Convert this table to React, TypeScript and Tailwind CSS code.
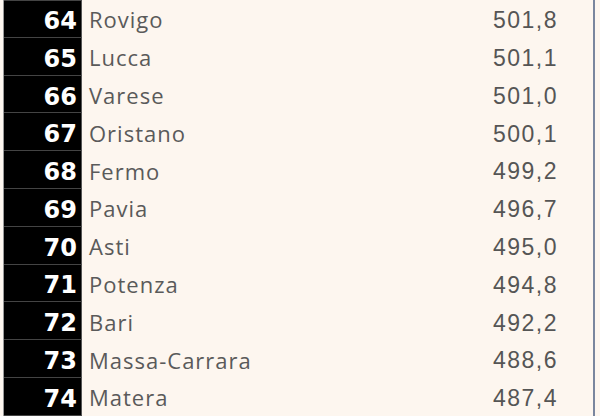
const rows: [number, string, string][] = [
  [64, "Rovigo", "501,8"],
  [65, "Lucca", "501,1"],
  [66, "Varese", "501,0"],
  [67, "Oristano", "500,1"],
  [68, "Fermo", "499,2"],
  [69, "Pavia", "496,7"],
  [70, "Asti", "495,0"],
  [71, "Potenza", "494,8"],
  [72, "Bari", "492,2"],
  [73, "Massa-Carrara", "488,6"],
  [74, "Matera", "487,4"],
];

export default function App() {
  return (
    <div className="h-[416px] w-[600px] overflow-hidden bg-[#fdf6ef] pl-[3px] pr-[5px]">
      <div className="border-l border-r-2 border-l-[#9a9a9a] border-r-[#7a869e]">
        {rows.map(([rank, name, value], i) => (
          <div key={rank} className="flex h-[37.8px] items-center">
            <div
              className={
                "flex h-full w-[78px] items-center justify-end border-r border-r-[#555] bg-black pt-[5px] pr-[4px] text-[24px] font-bold text-white " +
                (i === 0 ? "border-t border-t-[#444] " : "") +
                "border-b border-b-[#444]"
              }
              style={{ fontFamily: '"DejaVu Sans", "Liberation Sans", sans-serif' }}
            >
              {rank}
            </div>
            <div
              className="flex-1 pt-[2px] pl-[7px] text-[22px] tracking-[1px] text-[#5a5a5a]"
              style={{ fontFamily: '"Open Sans", "Liberation Sans", sans-serif' }}
            >
              {name}
            </div>
            <div
              className="pt-[3px] pr-[35px] text-[23px] tracking-[1.5px] text-[#555]"
              style={{ fontFamily: '"Liberation Sans", Arial, sans-serif' }}
            >
              {value}
            </div>
          </div>
        ))}
      </div>
    </div>
  );
}
